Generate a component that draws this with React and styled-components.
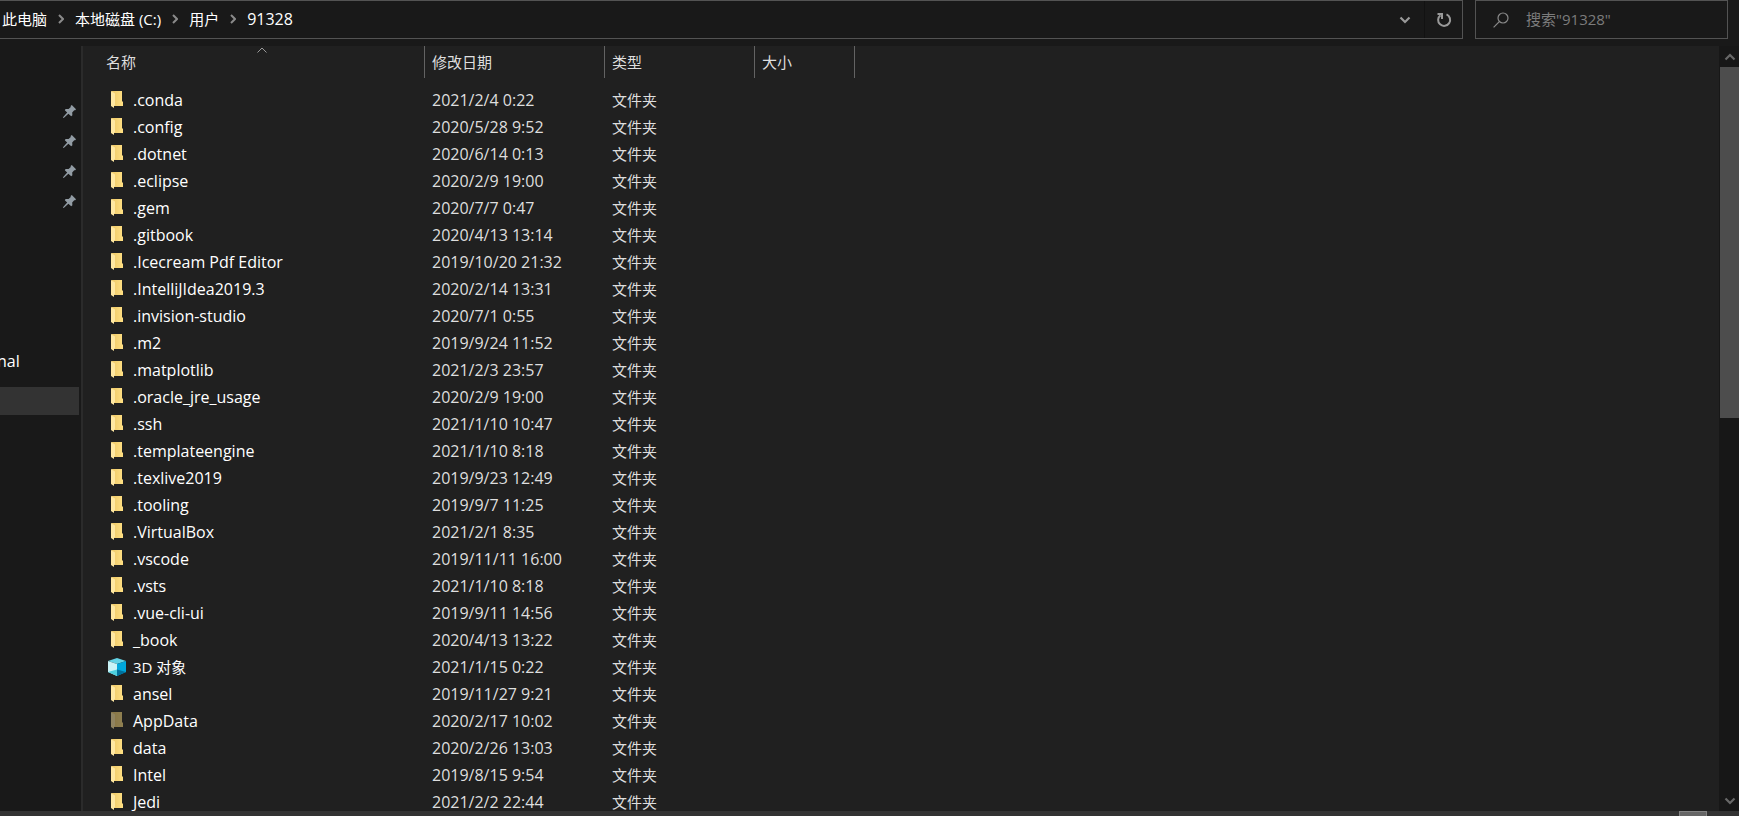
import React from 'react';
import styled, { createGlobalStyle } from 'styled-components';

const GlobalStyle = createGlobalStyle`
    * {
      box-sizing: border-box;
    }
    body {
      margin: 0;
      overflow: hidden;
      background: #191919;
      color: #fff;
      font-family: "Open Sans", "Noto Sans CJK SC", sans-serif;
      font-size: 15px;
      line-height: 20px;
    }
    button, input {
      font: inherit;
      color: inherit;
    }
`;

const Window = styled.div`
    display: flex;
    flex-direction: column;
    height: 100vh;
`;

const TopBar = styled.header`
    display: flex;
    flex: none;
    gap: 12px;
    height: 46px;
    padding: 0 11px 7px 0;
`;

const AddressBar = styled.div`
    display: flex;
    flex: 1;
    border: 1px solid #535353;
    border-left: 0;
`;

const Crumbs = styled.nav`
    display: flex;
    flex: 1;
    align-items: center;
    padding: 0 0 2px 2px;
`;

const Crumb = styled.a`
    color: #fff;
    font-size: ${props => (props.$latin ? '16px' : '15px')};
    text-decoration: none;
    white-space: nowrap;
`;

const CrumbArrow = styled.svg`
    width: 6px;
    height: 10px;
    margin: 0 11px;
    fill: none;
    stroke: #8a8a8a;
    stroke-width: 2;
`;

const BarButton = styled.button`
    display: flex;
    align-items: center;
    justify-content: center;
    width: 38px;
    padding: 0;
    border: 0;
    border-left: ${props => (props.$divided ? '1px solid #121212' : '0')};
    background: none;
    color: #999;
`;

const SearchBox = styled.label`
    display: flex;
    align-items: center;
    width: 253px;
    padding-left: 17px;
    border: 1px solid #535353;
`;

const SearchInput = styled.input`
    flex: 1;
    min-width: 0;
    margin-left: 17px;
    padding: 0 0 2px;
    border: 0;
    outline: 0;
    background: none;

    &::placeholder {
      color: #7c7c7c;
      opacity: 1;
    }
`;

const Main = styled.div`
    display: flex;
    flex: 1;
    min-height: 0;
`;

const Sidebar = styled.aside`
    flex: none;
    width: 83px;
    padding-top: 50px;
    border-right: 2px solid #2b2b2b;
    overflow: hidden;
`;

const PinRow = styled.div`
    display: flex;
    align-items: center;
    justify-content: flex-end;
    height: 30px;
    padding-right: 5px;
`;

const SideItem = styled.a`
    display: block;
    height: 28px;
    margin-right: 2px;
    margin-top: ${props => (props.$offset ? '131px' : '12px')};
    background: ${props => (props.$active ? '#333' : 'none')};
    color: #fff;
    font-size: 16px;
    line-height: 28px;
    text-decoration: none;
    text-indent: -3px;
`;

const FileArea = styled.main`
    flex: 1;
    overflow: hidden;
    background: #202020;
`;

const FileTable = styled.table`
    width: 100%;
    table-layout: fixed;
    border-collapse: separate;
    border-spacing: 0;
`;

const HeadCell = styled.th`
    position: relative;
    width: ${props => props.$width};
    height: 32px;
    padding: 0 0 0 ${props => (props.$first ? '23px' : '7px')};
    border-right: ${props => (props.$width ? '1px solid #636363' : '0')};
    color: #dedede;
    font-weight: 400;
    text-align: left;
`;

const SortArrow = styled.svg`
    position: absolute;
    top: 1px;
    left: 51%;
    width: 10px;
    height: 6px;
    fill: none;
    stroke: #9a9a9a;
`;

const Rows = styled.tbody`
    &::before {
      content: "";
      display: block;
      height: 8px;
    }
`;

const Cell = styled.td`
    height: 27px;
    padding: 0 0 0 7px;
    color: #dedede;
    font-size: ${props => (props.$latin ? '16px' : '15px')};
    white-space: nowrap;
`;

const NameCell = styled(Cell)`
    padding-left: 25px;
    color: #fff;
`;

const FileName = styled.div`
    display: flex;
    align-items: center;
`;

const FileIcon = styled.svg`
    flex: none;
    width: 18px;
    height: 18px;
    margin-right: 7px;
    opacity: ${props => (props.$hidden ? 0.5 : 1)};
`;

const ScrollBar = styled.div`
    display: flex;
    flex: none;
    flex-direction: column;
    width: 20px;
    padding-left: 1px;
    background: #171717;
`;

const ScrollButton = styled.button`
    display: flex;
    flex: none;
    align-items: center;
    justify-content: center;
    height: 21px;
    padding: 0;
    border: 0;
    background: none;
    color: #686868;
`;

const ScrollTrack = styled.div`
    flex: 1;
`;

const ScrollThumb = styled.div`
    height: 48.5%;
    background: #4d4d4d;
`;

const BottomStrip = styled.footer`
    display: flex;
    flex: none;
    justify-content: flex-end;
    height: 5px;
    padding-right: 32px;
    background: #333;
`;

const ViewToggle = styled.button`
    width: 28px;
    padding: 0;
    border: 1px solid #838383;
    border-bottom: 0;
    background: #666;
`;

const crumbs = ['此电脑', '本地磁盘 (C:)', '用户', '91328'];

const files = [
    ['.conda', '2021/2/4 0:22'],
    ['.config', '2020/5/28 9:52'],
    ['.dotnet', '2020/6/14 0:13'],
    ['.eclipse', '2020/2/9 19:00'],
    ['.gem', '2020/7/7 0:47'],
    ['.gitbook', '2020/4/13 13:14'],
    ['.Icecream Pdf Editor', '2019/10/20 21:32'],
    ['.IntelliJIdea2019.3', '2020/2/14 13:31'],
    ['.invision-studio', '2020/7/1 0:55'],
    ['.m2', '2019/9/24 11:52'],
    ['.matplotlib', '2021/2/3 23:57'],
    ['.oracle_jre_usage', '2020/2/9 19:00'],
    ['.ssh', '2021/1/10 10:47'],
    ['.templateengine', '2021/1/10 8:18'],
    ['.texlive2019', '2019/9/23 12:49'],
    ['.tooling', '2019/9/7 11:25'],
    ['.VirtualBox', '2021/2/1 8:35'],
    ['.vscode', '2019/11/11 16:00'],
    ['.vsts', '2021/1/10 8:18'],
    ['.vue-cli-ui', '2019/9/11 14:56'],
    ['_book', '2020/4/13 13:22'],
    ['3D 对象', '2021/1/15 0:22', 'cube'],
    ['ansel', '2019/11/27 9:21'],
    ['AppData', '2020/2/17 10:02', 'hidden'],
    ['data', '2020/2/26 13:03'],
    ['Intel', '2019/8/15 9:54'],
    ['Jedi', '2021/2/2 22:44'],
];

const isLatin = text => !/[\u4e00-\u9fff]/.test(text);

const Chevron = ({up}) => (
    <svg width="12" height="8" viewBox="0 0 12 8" fill="none" stroke="currentColor" strokeWidth="2.2" aria-hidden="true">
        <path d={up ? 'M1.5 6.5 6 2l4.5 4.5' : 'M1.5 1.5 6 6l4.5-4.5'}/>
    </svg>
);

const Pin = () => (
    <svg width="13" height="13" viewBox="0 0 13 13" fill="#929ca4" aria-hidden="true">
        <path d="M8.8 0 13 4.2 12.2 5.3 11.2 5.2 9.2 7.5 9.4 10.2 8.2 11.2 5.4 8.7 1 12.7 0 13 .2 12 4.2 7.6 1.8 5.2 2.6 4 5.6 4.1 7.8 2 7.6 1Z"/>
    </svg>
);

const FolderIcon = ({hidden}) => (
    <FileIcon viewBox="0 0 18 18" $hidden={hidden} aria-hidden="true">
        <defs>
            <linearGradient id="folder" x2="1">
                <stop offset="0" stopColor="#edc765"/>
                <stop offset="1" stopColor="#ffe084"/>
            </linearGradient>
        </defs>
        <path d="M3 0H14V10L15 11V15H6V3Z" fill="url(#folder)"/>
        <path d="M3 0 7 2.5V14L6 15V17L3 15Z" fill="#ffe8a2"/>
    </FileIcon>
);

const CubeIcon = () => (
    <FileIcon viewBox="0 0 18 18" aria-hidden="true">
        <path d="M9 0 18 3 9 6 0 3Z" fill="#63d3e5"/>
        <path d="M0 3 9 6V18L0 14Z" fill="#c9f3f6"/>
        <path d="M9 6 18 3V14L9 18Z" fill="#00a8dc"/>
        <path d="M0 14 9 11.5V18Z" fill="#4dcfdf"/>
        <path d="M9 11.5 18 14 9 18Z" fill="#00709b"/>
    </FileIcon>
);

const App = () => {

    return (
        <Window>
            <GlobalStyle/>
            <TopBar>
                <AddressBar>
                    <Crumbs>
                        {crumbs.map((name, i) =>
                            <React.Fragment key={name}>
                                {i > 0 && <CrumbArrow viewBox="0 0 6 10"><path d="M1 1 5 5 1 9"/></CrumbArrow>}
                                <Crumb href="#" $latin={isLatin(name)}>{name}</Crumb>
                            </React.Fragment>
                        )}
                    </Crumbs>
                    <BarButton aria-label="history"><Chevron/></BarButton>
                    <BarButton aria-label="refresh" $divided>
                        <svg width="16" height="16" viewBox="0 0 16 16" fill="none" stroke="currentColor" strokeWidth="2">
                            <path d="M10.5 2.4A6 6 0 1 1 4.4 3.2M1.5 2H6V7"/>
                        </svg>
                    </BarButton>
                </AddressBar>
                <SearchBox>
                    <svg width="16" height="16" viewBox="0 0 16 16" fill="none" stroke="#8a8a8a" strokeWidth="1.2" aria-hidden="true">
                        <circle cx="10" cy="6" r="5"/>
                        <path d="M6.3 9.7.6 15.4"/>
                    </svg>
                    <SearchInput aria-label="search" placeholder={'搜索"91328"'}/>
                </SearchBox>
            </TopBar>
            <Main>
                <Sidebar>
                    {[1, 2, 3, 4].map(n => <PinRow key={n}><Pin/></PinRow>)}
                    <SideItem href="#" $offset>nal</SideItem>
                    <SideItem href="#" $active aria-label="C:"/>
                </Sidebar>
                <FileArea>
                    <FileTable>
                        <thead>
                            <tr>
                                <HeadCell $width="342px" $first>
                                    名称
                                    <SortArrow viewBox="0 0 10 6"><path d="M.5 5.5 5 1l4.5 4.5"/></SortArrow>
                                </HeadCell>
                                <HeadCell $width="180px">修改日期</HeadCell>
                                <HeadCell $width="150px">类型</HeadCell>
                                <HeadCell $width="100px">大小</HeadCell>
                                <HeadCell/>
                            </tr>
                        </thead>
                        <Rows>
                            {files.map(([name, date, kind]) =>
                                <tr key={name}>
                                    <NameCell $latin={isLatin(name)}>
                                        <FileName>
                                            {kind === 'cube' ? <CubeIcon/> : <FolderIcon hidden={kind === 'hidden'}/>}
                                            {name}
                                        </FileName>
                                    </NameCell>
                                    <Cell $latin>{date}</Cell>
                                    <Cell>文件夹</Cell>
                                </tr>
                            )}
                        </Rows>
                    </FileTable>
                </FileArea>
                <ScrollBar>
                    <ScrollButton aria-label="up"><Chevron up/></ScrollButton>
                    <ScrollTrack><ScrollThumb/></ScrollTrack>
                    <ScrollButton aria-label="down"><Chevron/></ScrollButton>
                </ScrollBar>
            </Main>
            <BottomStrip>
                <ViewToggle aria-label="details"/>
            </BottomStrip>
        </Window>
    )

};
export default App
